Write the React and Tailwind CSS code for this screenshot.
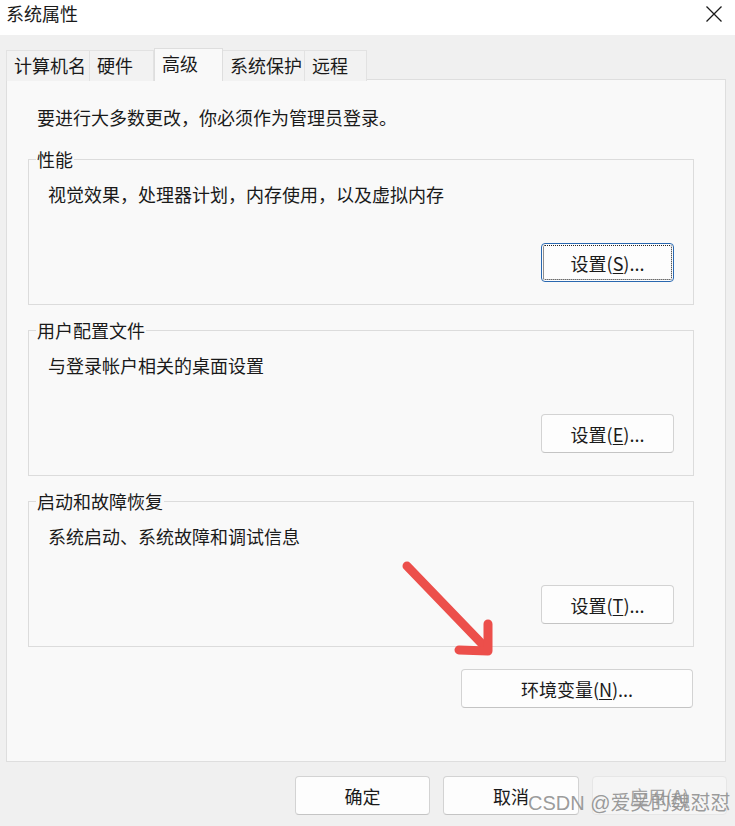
import React from 'react';

const font = { fontFamily: '"Noto Sans CJK SC", "Noto Sans", sans-serif' };

const tabs = [
  { name: '计算机名', w: 'w-[84px]' },
  { name: '硬件', w: 'w-[65px]' },
  { name: '高级', w: 'w-[69px]', active: true },
  { name: '系统保护', w: 'w-[83px]' },
  { name: '远程', w: 'w-[63px]' },
];

const Btn = ({ children, className = '', focused = false, disabled = false }) => (
  <div
    className={`h-[39px] flex items-center justify-center rounded-[4px] border text-[18px] leading-none ${
      disabled
        ? 'bg-[#f5f5f5] border-[#e6e6e6] text-[#a3a3a3]'
        : focused
        ? 'bg-[#fdfdfd] border-[#2a68b0] text-[#1a1a1a] outline-1 outline-dotted outline-[#222] -outline-offset-3'
        : 'bg-[#fdfdfd] border-[#d3d3d3] border-b-[#c4c4c4] text-[#1a1a1a]'
    } ${className}`}
  >
    {children}
  </div>
);

const Group = ({ title, desc, btnKey, focused, className = '' }) => (
  <fieldset className={`w-[666px] ml-[21px] border border-[#dcdcdc] px-0 pb-[22px] ${className}`}>
    <legend className="ml-[7px] px-[1px] text-[18px] leading-[24px] text-[#1a1a1a]">{title}</legend>
    <div className="px-[19px]">
      <div className="mt-[11px] text-[18px] leading-[24px] text-[#1a1a1a]">{desc}</div>
      <div className="mt-[37px] flex justify-end">
        <Btn className="w-[133px]" focused={focused}>
          设置(<span className="underline underline-offset-2">{btnKey}</span>)...
        </Btn>
      </div>
    </div>
  </fieldset>
);

export default function App() {
  return (
    <div className="relative w-[735px] h-[826px] overflow-hidden bg-[#f0f0f0]" style={font}>
      {/* title bar */}
      <div className="h-[35px] bg-white flex items-start justify-between">
        <div className="pl-[6px] text-[18px] leading-[27px] text-[#1a1a1a]">系统属性</div>
        <svg width="18" height="18" viewBox="0 0 18 18" className="mt-[5px] mr-[12px]">
          <path d="M1.5 1.5 L16.5 16.5 M16.5 1.5 L1.5 16.5" stroke="#1a1a1a" strokeWidth="1.3" fill="none" />
        </svg>
      </div>

      {/* tabs */}
      <div className="mt-[13px] h-[33px] flex items-end pl-[6px]">
        {tabs.map((t) =>
          t.active ? (
            <div
              key={t.name}
              className={`${t.w} relative z-10 h-[33px] bg-[#f9f9f9] border border-b-0 border-[#dedede] pl-[7px] pb-[4px] flex items-center text-[18px] text-[#1a1a1a]`}
            >
              {t.name}
            </div>
          ) : (
            <div
              key={t.name}
              className={`${t.w} h-[31px] bg-[#f2f2f2] border border-b-0 border-[#e2e2e2] -ml-px first:ml-0 pl-[7px] pb-[2px] flex items-center text-[18px] text-[#1a1a1a]`}
            >
              {t.name}
            </div>
          )
        )}
      </div>

      {/* panel */}
      <div className="-mt-[2px] ml-[6px] w-[720px] h-[683px] bg-[#f9f9f9] border border-[#dedede] pt-[25px]">
        <div className="pl-[30px] text-[18px] leading-[24px] text-[#1a1a1a]">要进行大多数更改，你必须作为管理员登录。</div>
        <Group className="mt-[18px]" title="性能" desc="视觉效果，处理器计划，内存使用，以及虚拟内存" btnKey="S" focused />
        <Group className="mt-[13px]" title="用户配置文件" desc="与登录帐户相关的桌面设置" btnKey="E" />
        <Group className="mt-[13px]" title="启动和故障恢复" desc="系统启动、系统故障和调试信息" btnKey="T" />
        <div className="mt-[22px] flex justify-end pr-[32px]">
          <Btn className="w-[232px]">
            环境变量(<span className="underline underline-offset-2">N</span>)...
          </Btn>
        </div>
      </div>

      {/* bottom buttons */}
      <div className="mt-[14px] flex justify-end gap-[13px] pr-[8px]">
        <Btn className="w-[135px]">确定</Btn>
        <Btn className="w-[136px]">取消</Btn>
        <Btn className="w-[135px]" disabled>
          应用(<span className="underline underline-offset-2">A</span>)
        </Btn>
      </div>

      {/* red annotation arrow */}
      <svg className="absolute left-0 top-0 pointer-events-none" width="735" height="826">
        <g stroke="#ec4f4b" strokeWidth="9" strokeLinecap="round" strokeLinejoin="round" fill="none">
          <path d="M407 566 L486 648" />
          <path d="M488 624 L488 651 L459 650" />
        </g>
      </svg>

      {/* watermark */}
      <div
        className="absolute left-[528px] top-[789px] text-[20px] leading-[28px] text-[#8f8f8f]/90 whitespace-nowrap"
        style={{ fontFamily: '"Liberation Sans", "Noto Sans CJK SC", sans-serif' }}
      >
        CSDN @爱吴的魏怼怼
      </div>
    </div>
  );
}
